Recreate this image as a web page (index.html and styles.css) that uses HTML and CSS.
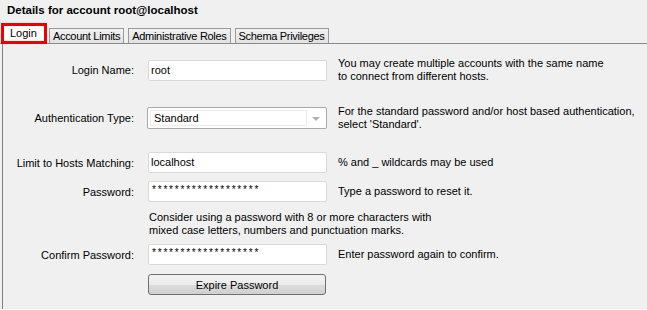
FILE: index.html
```html
<!DOCTYPE html>
<html lang="en">
<head>
    <meta charset="UTF-8">
    <title>Details for account root@localhost</title>
    <link rel="stylesheet" href="styles.css">
</head>
<body>
    <div class="window">
        <h1 class="title">Details for account root@localhost</h1>
        <div class="tabs">
            <div class="tab active">Login</div>
            <div class="tab">Account Limits</div>
            <div class="tab">Administrative Roles</div>
            <div class="tab">Schema Privileges</div>
        </div>
        <div class="panel">
            <div class="row row-login">
                <label class="label">Login Name:</label>
                <div class="field">root</div>
                <div class="help">You may create multiple accounts with the same name<br>to connect from different hosts.</div>
            </div>
            <div class="row row-auth">
                <label class="label">Authentication Type:</label>
                <div class="select">
                    <span class="select-value">Standard</span>
                    <span class="select-arrow"></span>
                </div>
                <div class="help">For the standard password and/or host based authentication,<br>select 'Standard'.</div>
            </div>
            <div class="row row-hosts">
                <label class="label">Limit to Hosts Matching:</label>
                <div class="field">localhost</div>
                <div class="help">% and _ wildcards may be used</div>
            </div>
            <div class="row row-pass">
                <label class="label">Password:</label>
                <div class="field secret">*******************</div>
                <div class="help">Type a password to reset it.</div>
            </div>
            <div class="hint">Consider using a password with 8 or more characters with<br>mixed case letters, numbers and punctuation marks.</div>
            <div class="row row-confirm">
                <label class="label">Confirm Password:</label>
                <div class="field secret">*******************</div>
                <div class="help">Enter password again to confirm.</div>
            </div>
            <div class="row row-button">
                <span></span>
                <button class="btn">Expire Password</button>
            </div>
        </div>
    </div>
</body>
</html>
```

FILE: styles.css
```css
body {
    margin: 0;
    background-color: #ffffff;
    font-family: "Liberation Sans", Arial, sans-serif;
    font-size: 11px;
    color: #000;
}
.window {
    width: 647px;
    height: 309px;
    background-color: #f0f0f0;
    display: flex;
    flex-direction: column;
    overflow: hidden;
}
.title {
    margin: 0;
    padding: 3px 0 0 7px;
    height: 23px;
    box-sizing: border-box;
    font-size: 11.5px;
    font-weight: bold;
    line-height: 14px;
}
.tabs {
    display: flex;
    align-items: flex-end;
    height: 21px;
    box-sizing: border-box;
    padding-left: 1px;
    border-bottom: 1px solid #898989;
}
.tab {
    height: 15px;
    line-height: 14px;
    padding: 0 3px;
    margin-right: 4px;
    box-sizing: border-box;
    border: 1px solid #9a9a9a;
    border-bottom: none;
    background: linear-gradient(#f2f2f2, #e1e1e1);
    color: #000;
    white-space: nowrap;
    letter-spacing: -0.3px;
}
.tab.active {
    height: 21px;
    margin-bottom: -1px;
    padding: 0 7px 0 6px;
    margin-right: 2px;
    border: 3px solid #ee0000;
    background: #ffffff;
    line-height: 14px;
    letter-spacing: 0;
}
.panel {
    flex: 1;
    margin-left: 2px;
    border-left: 1px solid #828282;
    padding-top: 13px;
    display: flex;
    flex-direction: column;
}
.row {
    display: grid;
    grid-template-columns: 145px 179px 1fr;
    align-items: center;
}
.label {
    text-align: right;
    padding-right: 14px;
    white-space: nowrap;
}
.help {
    padding-left: 11px;
    line-height: 13px;
    white-space: nowrap;
}
.field {
    height: 21px;
    box-sizing: border-box;
    border: 1px solid #d9d9d9;
    border-radius: 2px;
    background: #fff;
    padding: 2px 0 0 2px;
    line-height: 14px;
}
.field.secret {
    font-size: 10px;
    letter-spacing: 1.8px;
    line-height: 9px;
    padding-top: 3px;
    padding-left: 3px;
}
.select {
    height: 22px;
    box-sizing: border-box;
    border: 1px solid #a9a9a9;
    border-radius: 2px;
    background: #fff;
    display: flex;
    padding: 2px;
    margin-left: -1px;
}
.select-value {
    flex: 1;
    border: 1px solid #ececec;
    padding-left: 3px;
    line-height: 14px;
}
.select-arrow {
    width: 17px;
    position: relative;
}
.select-arrow::after {
    content: "";
    position: absolute;
    left: 5px;
    top: 7px;
    border-left: 4px solid transparent;
    border-right: 4px solid transparent;
    border-top: 4px solid #b0b0b0;
}
.row-auth { margin-top: 22px; }
.row-hosts { margin-top: 21px; }
.row-pass { margin-top: 8px; }
.hint {
    margin: 9px 0 0 146px;
    line-height: 13px;
}
.row-confirm { margin-top: 7px; }
.row-button { margin-top: 9px; }
.btn {
    height: 21px;
    width: 178px;
    font-family: inherit;
    font-size: 11px;
    color: #000;
    border: 1px solid #707070;
    border-radius: 3px;
    background: linear-gradient(#f3f3f3 0%, #ebebeb 50%, #dddddd 51%, #cfcfcf 100%);
    padding: 0;
}
```
